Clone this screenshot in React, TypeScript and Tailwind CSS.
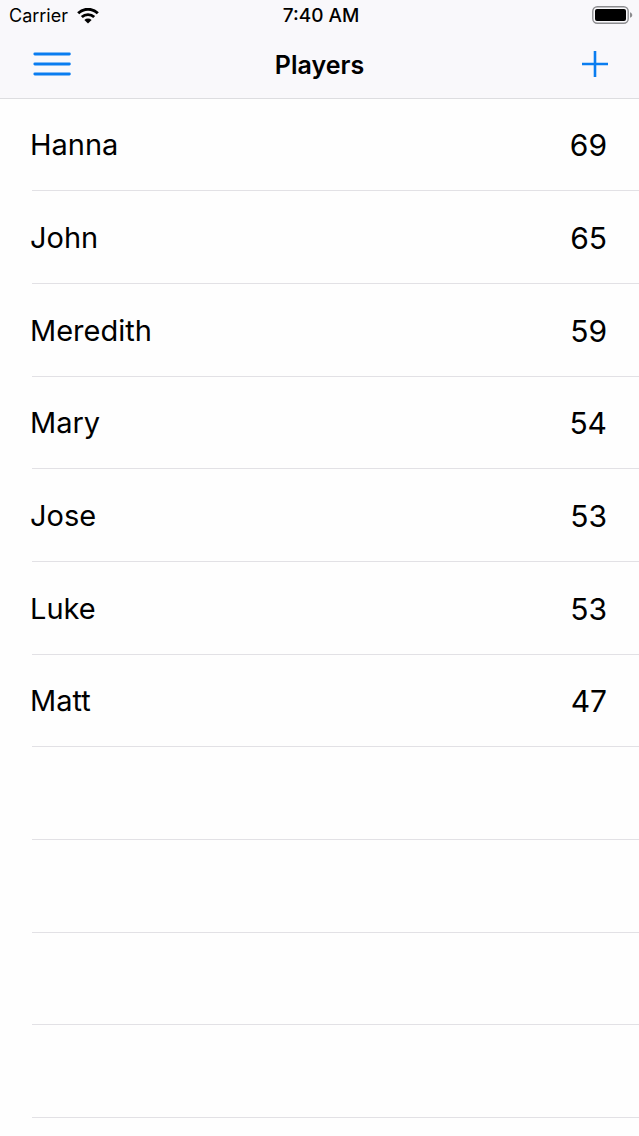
interface Player {
  name: string;
  score: number;
}

const players: Player[] = [
  { name: "Hanna", score: 69 },
  { name: "John", score: 65 },
  { name: "Meredith", score: 59 },
  { name: "Mary", score: 54 },
  { name: "Jose", score: 53 },
  { name: "Luke", score: 53 },
  { name: "Matt", score: 47 },
];

// Blank rows that continue the list below the last player
const emptyRows = [0, 1, 2, 3];

function WifiIcon() {
  return (
    <svg width="22" height="16" viewBox="0 0 22 16" fill="none" aria-hidden="true">
      <path d="M1.2 5.3a14 14 0 0 1 19.6 0" stroke="#000" strokeWidth="3" />
      <path d="M4.8 9.1a8.8 8.8 0 0 1 12.4 0" stroke="#000" strokeWidth="2.8" />
      <path d="M11 15.6 7.4 12a5.1 5.1 0 0 1 7.2 0z" fill="#000" />
    </svg>
  );
}

function BatteryIcon() {
  return (
    <svg width="41" height="18" viewBox="0 0 41 18" fill="none" aria-hidden="true">
      <rect x="0.8" y="0.8" width="35.4" height="16.4" rx="4.5" stroke="#8c8c8f" strokeWidth="1.4" />
      <rect x="3" y="3" width="31" height="12" rx="2" fill="#000" />
      <path d="M38 6.2c3 1 3 4.6 0 5.6z" fill="#8c8c8f" />
    </svg>
  );
}

function StatusBar() {
  return (
    <div className="grid h-8 grid-cols-[1fr_auto_1fr] items-center pr-1.5 pl-[9px] text-[18px] leading-8">
      <div className="flex items-center gap-[9px]">
        <span>Carrier</span>
        <WifiIcon />
      </div>
      <span className="text-center text-[19px] font-medium">7:40 AM</span>
      <div className="flex justify-end pb-0.5">
        <BatteryIcon />
      </div>
    </div>
  );
}

function NavBar() {
  return (
    <div className="grid h-[66px] grid-cols-3 items-center px-[29px]">
      <button type="button" aria-label="Menu" className="justify-self-start px-1 pb-0.5">
        <svg width="38" height="26" viewBox="0 0 38 26" fill="none" className="block">
          <path
            d="M1.8 3h34.600M1.8 13h34.600M1.8 23h34.600"
            stroke="#0a7df0"
            strokeWidth="2.8"
            strokeLinecap="round"
          />
        </svg>
      </button>
      <h1 className="text-center text-[25px] leading-8 font-semibold">Players</h1>
      <button type="button" aria-label="Add player" className="justify-self-end pb-0.5">
        <svg width="30" height="30" viewBox="0 0 30 30" fill="none" className="block">
          <path d="M2 15h26M15 2v26" stroke="#0a7df0" strokeWidth="2.6" />
        </svg>
      </button>
    </div>
  );
}

function PlayerTable() {
  return (
    <div className="pl-8">
      <table aria-label="Players" className="w-full border-collapse text-[29px] leading-9">
        <tbody>
          {players.map((player) => (
            <tr
              key={player.name}
              className="h-[93px] shadow-[inset_0_-1px_0_#e2e1e5] nth-[3n+1]:h-[92px]"
            >
              <td className="p-0">
                <span className="-ml-0.5 block">{player.name}</span>
              </td>
              <td className="p-0 pr-8 text-right text-[30px]">{player.score}</td>
            </tr>
          ))}
          {emptyRows.map((row) => (
            <tr
              key={row}
              className="h-[93px] shadow-[inset_0_-1px_0_#e2e1e5] nth-[3n+1]:h-[92px]"
            >
              <td colSpan={2} className="p-0" />
            </tr>
          ))}
        </tbody>
      </table>
    </div>
  );
}

export default function App() {
  return (
    <div className="min-h-screen bg-[#fefefe] font-['Inter','Liberation_Sans',sans-serif] text-black">
      <header className="border-b border-[#dddde0] bg-[#f9f8fb]">
        <StatusBar />
        <NavBar />
      </header>
      <main>
        <PlayerTable />
      </main>
    </div>
  );
}
